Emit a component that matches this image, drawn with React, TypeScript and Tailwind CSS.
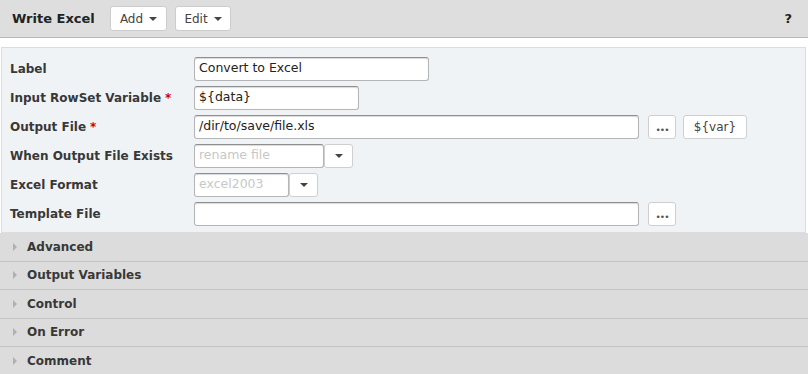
const font = { fontFamily: '"DejaVu Sans", Verdana, sans-serif' };

function Caret() {
  return <span className="inline-block w-0 h-0 border-l-[4px] border-r-[4px] border-t-[4px] border-l-transparent border-r-transparent border-t-[#444]" />;
}

function Row({ label, required, children }: { label: string; required?: boolean; children: React.ReactNode }) {
  return (
    <div className="flex items-center h-[29px]">
      <div className="w-[184px] text-[12px] font-bold text-[#383838]">
        {label}
        {required && <span className="text-[#c00] ml-1">*</span>}
      </div>
      {children}
    </div>
  );
}

const inputCls =
  'h-[24px] bg-white border border-[#b5b5b5] border-t-[#8f8f8f] rounded-[3px] px-[4px] text-[12.5px] text-[#222] shadow-[inset_0_1px_1px_rgba(0,0,0,0.15)] flex items-center';

function SmallBtn({ children, w }: { children: React.ReactNode; w: string }) {
  return (
    <div className={`h-[24px] ${w} bg-white border border-[#cfcfcf] rounded-[3px] flex items-center justify-center text-[12px] text-[#444]`}>
      {children}
    </div>
  );
}

function Dots() {
  return <span className="text-[9px] leading-none mt-[7px] tracking-[-1px] text-[#555]">•••</span>;
}

export default function App() {
  const sections = ['Advanced', 'Output Variables', 'Control', 'On Error', 'Comment'];
  return (
    <div className="w-[808px] h-[374px] bg-white overflow-hidden" style={font}>
      {/* header */}
      <div className="h-[38px] bg-[#dedede] border-b border-[#b8b8b8] flex items-center pl-[12px] pr-[16px]">
        <span className="text-[13px] font-bold text-[#222] w-[98px]">Write Excel</span>
        <div className="flex gap-[8px]">
          <div className="h-[25px] w-[57px] bg-white border border-[#cccccc] rounded-[3px] flex items-center justify-center gap-[6px] text-[12px] text-[#444]">
            Add <Caret />
          </div>
          <div className="h-[25px] w-[56px] bg-white border border-[#cccccc] rounded-[3px] flex items-center justify-center gap-[6px] text-[12px] text-[#444]">
            Edit <Caret />
          </div>
        </div>
        <span className="ml-auto text-[13px] font-bold text-[#222]">?</span>
      </div>

      {/* form */}
      <div className="mt-[9px] ml-[1px] mr-[2px] border border-[#dddddd] bg-[#f0f3f6] pl-[8px] pt-[6px] pb-[4px]">
        <Row label="Label">
          <div className={`${inputCls} w-[235px]`}>Convert to Excel</div>
        </Row>
        <Row label="Input RowSet Variable" required>
          <div className={`${inputCls} w-[165px]`}>{'${data}'}</div>
        </Row>
        <Row label="Output File" required>
          <div className={`${inputCls} w-[445px]`}>/dir/to/save/file.xls</div>
          <div className="ml-[9px]"><SmallBtn w="w-[28px]"><Dots /></SmallBtn></div>
          <div className="ml-[7px]"><SmallBtn w="w-[64px]">{'${var}'}</SmallBtn></div>
        </Row>
        <Row label="When Output File Exists">
          <div className={`${inputCls} w-[130px] text-[#c8c8c8]`}>rename file</div>
          <SmallBtn w="w-[29px]"><Caret /></SmallBtn>
        </Row>
        <Row label="Excel Format">
          <div className={`${inputCls} w-[95px] text-[#c8c8c8]`}>excel2003</div>
          <SmallBtn w="w-[29px]"><Caret /></SmallBtn>
        </Row>
        <Row label="Template File">
          <div className={`${inputCls} w-[445px]`}></div>
          <div className="ml-[9px]"><SmallBtn w="w-[28px]"><Dots /></SmallBtn></div>
        </Row>
      </div>

      {/* sections */}
      <div>
        {sections.map((s) => (
          <div key={s} className="h-[28.5px] bg-[#dcdcdc] border-b border-[#c2c2c2] flex items-center pl-[13px]">
            <span className="inline-block w-0 h-0 border-t-[4px] border-b-[4px] border-l-[4px] border-t-transparent border-b-transparent border-l-[#b0b0b0] mr-[10px]" />
            <span className="text-[12px] font-bold text-[#383838]">{s}</span>
          </div>
        ))}
      </div>
    </div>
  );
}
